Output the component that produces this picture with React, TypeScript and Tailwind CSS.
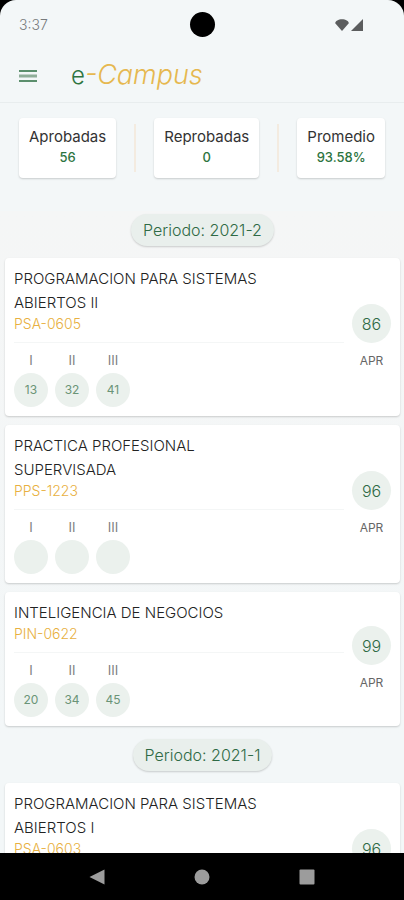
import React from 'react';

const stats = [
  { label: 'Aprobadas', value: '56' },
  { label: 'Reprobadas', value: '0' },
  { label: 'Promedio', value: '93.58%' }
];

type Course = {
  name: string;
  code: string;
  partials: string[];
  grade: string;
};

const periods: { name: string; courses: Course[] }[] = [
  {
    name: '2021-2',
    courses: [
      { name: 'PROGRAMACION PARA SISTEMAS ABIERTOS II', code: 'PSA-0605', partials: ['13', '32', '41'], grade: '86' },
      { name: 'PRACTICA PROFESIONAL SUPERVISADA', code: 'PPS-1223', partials: ['', '', ''], grade: '96' },
      { name: 'INTELIGENCIA DE NEGOCIOS', code: 'PIN-0622', partials: ['20', '34', '45'], grade: '99' }
    ]
  },
  {
    name: '2021-1',
    courses: [
      { name: 'PROGRAMACION PARA SISTEMAS ABIERTOS I', code: 'PSA-0603', partials: ['', '', ''], grade: '96' }
    ]
  }
];

const numerals = ['I', 'II', 'III'];

const StatusBar: React.FC = () => (
  <div className="grid h-[49px] shrink-0 grid-cols-3 items-center px-[19px]">
    <span className="text-sm font-light text-[#777b7d]">3:37</span>
    <span className="h-[25px] w-[25px] justify-self-center rounded-full bg-black"></span>
    <div className="flex items-center gap-[2px] justify-self-end pr-[22px]">
      <svg className="h-3 w-[14px]" viewBox="0 0 14 12" fill="#5b5d5e"><path d="M7 12 0.2 4.2C0.2 2.2 3.4 0.2 7 0.2s6.8 2 6.8 4z" /></svg>
      <svg className="h-3 w-3" viewBox="0 0 12 12" fill="#5b5d5e"><path d="M12 0v12H0z" /></svg>
    </div>
  </div>
);

const Header: React.FC = () => (
  <header className="flex h-[54px] shrink-0 items-center gap-[34px] border-b border-[#e8edee] px-[19px]">
    <button type="button" aria-label="Menú">
      <svg className="h-[14px] w-[18px]" viewBox="0 0 18 14" fill="none">
        <path d="M0 2h18M0 12h18" stroke="#5b8f6d" strokeWidth="2" />
        <path d="M0 7h18" stroke="#8fae99" strokeWidth="3" />
      </svg>
    </button>
    <h1 className="text-[27px] leading-8 font-light text-[#e6b84f]">
      <span className="text-2xl text-[#2c7440]">e</span>
      <em>-Campus</em>
    </h1>
  </header>
);

const Stats: React.FC = () => (
  <section className="flex h-[108px] shrink-0 items-start justify-between px-[19px] pt-[15px]">
    {stats.map((item, idx) => (
      <React.Fragment key={item.label}>
        {idx > 0 && <div className="mt-[6px] h-12 w-[2px] bg-[#f3ebe0]"></div>}
        <div className="flex h-[60px] flex-col items-center rounded-sm bg-white px-[10px] pt-2 text-[15px] leading-[21px] shadow-[0_1px_2px_rgba(0,0,0,0.18)]">
          <span className="text-[#333333]">{item.label}</span>
          <span className="text-[13px] font-medium text-[#2c7440]">{item.value}</span>
        </div>
      </React.Fragment>
    ))}
  </section>
);

const CourseCard: React.FC<{ course: Course }> = ({ course }) => (
  <article className="flex items-center justify-between gap-2 rounded-sm bg-white px-[9px] py-[9px] shadow-[0_1px_2px_rgba(0,0,0,0.18)]">
    <div className="flex-1">
      <h3 className="max-w-[260px] text-[15px] leading-6 font-light text-[#222222]">{course.name}</h3>
      <p className="text-sm leading-[18px] font-light text-[#e8b040]">{course.code}</p>
      <div className="mt-[9px] flex gap-[7px] border-t border-[#f4f6f6] pt-2">
        {numerals.map((numeral, idx) => (
          <div key={numeral} className="flex flex-col items-center gap-1">
            <span className="text-[13px] leading-[18px] text-[#808080]">{numeral}</span>
            <span className="flex h-[34px] w-[34px] items-center justify-center rounded-full bg-[#ebf1ed] text-xs text-[#6a9477]">
              {course.partials[idx]}
            </span>
          </div>
        ))}
      </div>
    </div>
    <div className="flex flex-col items-center gap-[9px]">
      <span className="flex h-[39px] w-[39px] items-center justify-center rounded-full bg-[#ebf1ed] text-base font-light text-[#2f6a45]">
        {course.grade}
      </span>
      <span className="text-xs leading-[18px] text-[#666666]">APR</span>
    </div>
  </article>
);

const NavBar: React.FC = () => (
  <nav className="flex h-[47px] shrink-0 items-center justify-around bg-black px-11">
    <button type="button" aria-label="Atrás">
      <svg className="h-4 w-4" viewBox="0 0 16 16" fill="#9c9c9c"><path d="M15.5 0.5v15L0.5 8z" /></svg>
    </button>
    <button type="button" aria-label="Inicio">
      <svg className="h-4 w-4" viewBox="0 0 16 16" fill="#9c9c9c"><circle cx="8" cy="8" r="7.5" /></svg>
    </button>
    <button type="button" aria-label="Recientes">
      <svg className="h-4 w-4" viewBox="0 0 16 16" fill="#9c9c9c"><rect x="0.5" y="0.5" width="15" height="15" rx="1" /></svg>
    </button>
  </nav>
);

export default function App() {
  return (
    <div className="h-screen bg-black font-['Inter',sans-serif]">
      <div className="flex h-full flex-col overflow-hidden rounded-t-2xl bg-[#f3f7f8]">
        <StatusBar />
        <Header />
        <Stats />
        <main className="min-h-0 flex-1 overflow-y-auto [scrollbar-width:none]">
          {periods.map((period) => (
            <section key={period.name} className="pr-1 pb-[10px] pl-[5px] first:bg-linear-to-b first:from-[#f5f6f6] first:to-[#f3f7f8]">
              <div className="flex justify-center pt-[3px] pb-3">
                <h2 className="flex h-8 items-center rounded-full bg-[#e9efec] px-3 text-base font-light text-[#2f6a45] shadow-[0_1px_2px_rgba(0,0,0,0.18)]">
                  Periodo: {period.name}
                </h2>
              </div>
              <div className="flex flex-col gap-[9px]">
                {period.courses.map((course) => (
                  <CourseCard key={course.code} course={course} />
                ))}
              </div>
            </section>
          ))}
        </main>
        <NavBar />
      </div>
    </div>
  );
}
